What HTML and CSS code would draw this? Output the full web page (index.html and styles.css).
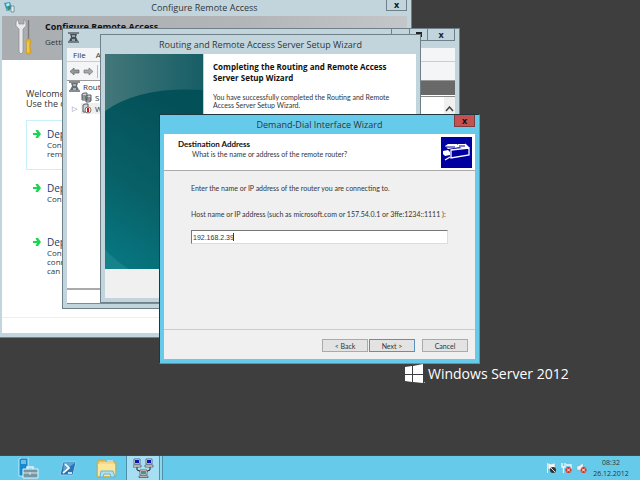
FILE: index.html
```html
<!DOCTYPE html>
<html lang="en">
<head>
<meta charset="utf-8">
<title>Windows Server 2012</title>
<link rel="stylesheet" href="styles.css">
</head>
<body>
<main class="desktop">
  <div class="brand">
    <svg class="brand-logo" width="22" height="20" viewBox="0 0 22 20"><path fill="#fff" d="M1 3l7-1v8H1zM9 2l10-2v10H9zM1 11h7v7l-7-1zM9 11h10v8L9 18z"/><path fill="#aaa" d="M20 18h1v1h-1z"/></svg>
    <span>Windows Server 2012</span>
  </div>

  <section class="window access">
    <header class="titlebar">
      <svg class="app-icon" width="11" height="11" viewBox="0 0 11 11"><path fill="#3c9ac4" d="M0 1l6-1 2 6-6 1z"/><path fill="#b8edf5" d="M2 2l3-1 1 3-3 .5z"/><path fill="#3a8f63" d="M3 5l3-2 1 4-3 1z"/><path fill="#e8eef0" stroke="#54788a" stroke-width=".7" d="M7 4h3v6H7z"/><path stroke="#3974a5" d="M2 8h4"/></svg>
      <h2 class="title">Configure Remote Access</h2>
      <button class="close" aria-label="Close Configure Remote Access">x</button>
    </header>
    <div class="pane">
      <div class="hero">
        <svg width="18" height="38" viewBox="0 0 18 38"><path fill="#e9e9e9" stroke="#8b8e90" stroke-width=".7" d="M3 1L1 4v4l3 3v23l2 2 2-2V11l3-3V4L9 1v5H4z"/><path stroke="#777b7e" stroke-width="1.4" d="M13.500 2v20"/><path fill="#e8b520" stroke="#c99310" stroke-width=".6" d="M12 21h3l1 3-1 3 1 8-1 1h-3l-1-1 1-8-1-3z"/><path stroke="#f8dc72" d="M13 24v10"/></svg>
        <div class="hero-text"><h3>Configure Remote Access</h3><p>Getti</p></div>
      </div>
      <div class="choices">
        <p class="welcome">Welcome<br>Use the o</p>
        <a href="#both" class="choice selected"><svg class="arrow" width="8" height="8" viewBox="0 0 8 8"><path fill="#18d64d" d="M0 3h4L2.500 0H5l3 4-3 4H2.500L4 5H0z"/></svg><span><b>Dep</b><small>Conf<br>remo</small></span></a>
        <a href="#direct" class="choice"><svg class="arrow" width="8" height="8" viewBox="0 0 8 8"><path fill="#18d64d" d="M0 3h4L2.500 0H5l3 4-3 4H2.500L4 5H0z"/></svg><span><b>Dep</b><small>Conf</small></span></a>
        <a href="#vpn" class="choice"><svg class="arrow" width="8" height="8" viewBox="0 0 8 8"><path fill="#18d64d" d="M0 3h4L2.500 0H5l3 4-3 4H2.500L4 5H0z"/></svg><span><b>Dep</b><small>Conf<br>conn<br>can l</small></span></a>
      </div>
      <footer class="pane-foot"></footer>
    </div>
  </section>

  <section class="window console">
    <header class="titlebar">
      <svg class="app-icon" width="11" height="11" viewBox="0 0 11 11"><path d="M0 1h11M0 10h11" stroke="#25292b"/><path fill="#445057" d="M2 2h7l-1 3 2 4H1l2-4z"/><path stroke="#eef" d="M4 4h3M4 8h3"/></svg>
      <div class="controls"><button aria-label="Minimize"></button><button aria-label="Maximize"><svg width="6" height="5"><path fill="none" stroke="#222" stroke-width="2" d="M1 1h4v3H1z"/></svg></button><button class="shut" aria-label="Close console">x</button></div>
    </header>
    <div class="pane">
      <nav class="menu"><button>File</button><button>A</button></nav>
      <div class="toolbar">
        <button aria-label="Back"><svg width="11" height="9" viewBox="0 0 11 9"><path fill="#92989b" stroke="#666" stroke-width=".7" d="M1 4.500L5 1v2h5v3H5v2z"/></svg></button>
        <button aria-label="Forward"><svg width="11" height="9" viewBox="0 0 11 9"><path fill="#a5aaac" stroke="#777" stroke-width=".7" d="M10 4.500L6 1v2H1v3h5v2z"/></svg></button>
        <i></i>
      </div>
      <div class="console-main">
        <ul class="tree">
          <li><svg width="11" height="11" viewBox="0 0 11 11"><path d="M0 1h11M0 10h11" stroke="#161918"/><path fill="#647078" d="M2 2h7l-1 3 2 4H1l2-4z"/><path stroke="#eef" d="M4 4h3M4 8h3"/></svg>Routi</li>
          <li class="sub"><svg width="11" height="11" viewBox="0 0 11 11"><path fill="#d2d7d9" stroke="#555f64" d="M1 2l2-1h3v7H1zM5 4l2-1h3v6l-2 1H5z"/><path stroke="#555" d="M1 4h4M1 6h4M5 6h5M5 8h5"/></svg>S</li>
          <li class="sub current"><span class="twist">▷</span><svg width="11" height="11" viewBox="0 0 11 11"><path fill="#d2d7d9" stroke="#555f64" d="M2 2l2-1h3v8H2z"/><circle cx="7" cy="7" r="3" fill="#fff" stroke="#777"/><path fill="#e01010" d="M6 5h2v4H6z"/></svg>W</li>
        </ul>
        <div class="detail"><div class="detail-head"></div><div class="detail-body"><button class="scroll-up" aria-label="Scroll up"><svg width="9" height="6" viewBox="0 0 9 6"><path fill="none" stroke="#444" stroke-width="1.500" d="M1 5l3.500-4L8 5"/></svg></button></div></div>
      </div>
      <footer class="status"></footer>
    </div>
  </section>

  <section class="window setup">
    <header class="titlebar"><h2 class="title">Routing and Remote Access Server Setup Wizard</h2></header>
    <div class="pane">
      <div class="setup-main">
        <svg class="banner" viewBox="0 0 98 215" preserveAspectRatio="none"><defs><linearGradient id="deep" x1=".6" y1="0" x2=".3" y2="1"><stop offset=".2" stop-color="#045058"/><stop offset=".65" stop-color="#086067"/><stop offset="1" stop-color="#07757f"/></linearGradient><linearGradient id="haze" x2="1" y2="0"><stop stop-color="#43777a"/><stop offset="1" stop-color="#175e67"/></linearGradient></defs><path fill="url(#deep)" d="M0 0h98v215H0z"/><path fill="url(#haze)" d="M0 0h98v36Q35 32 0 57z"/><path fill="#168289" d="M0 195q10 12 24 20H0z"/></svg>
        <div class="setup-text"><h3>Completing the Routing and Remote Access Server Setup Wizard</h3><p>You have successfully completed the Routing and Remote Access Server Setup Wizard.</p></div>
      </div>
      <footer class="setup-foot"></footer>
    </div>
  </section>

  <section class="window dial">
    <header class="titlebar"><h1 class="title">Demand-Dial Interface Wizard</h1><button class="close" aria-label="Close wizard">x</button></header>
    <form class="pane">
      <div class="dial-head">
        <div><h3>Destination Address</h3><p>What is the name or address of the remote router?</p></div>
        <svg width="31" height="31" viewBox="0 0 31 31"><path fill="#0000a0" d="M0 0h31v31H0z"/><path stroke="#000070" stroke-dasharray="1 3" d="M0 3h31M0 28h31"/><path fill="#fff" d="M4 9l3-2h9l3 3-12 2zM17 7h7l4 4-6 1-5-3zM2 14l5-1 2 2v3l-5 1-2-2z"/><path fill="none" stroke="#fff" stroke-width="1.300" d="M10 13l18-2v7l-18 3zM9 20l-5 3M24 7l4 4"/><path fill="none" stroke="#0000a0" d="M5 10h9M18 9h6"/></svg>
      </div>
      <div class="dial-body">
        <p>Enter the name or IP address of the router you are connecting to.</p>
        <label for="host">Host name or IP address (such as microsoft.com or 157.54.0.1 or 3ffe:1234::1111 ):</label>
        <div class="field"><input id="host" type="text" value="192.168.2.39"><i class="caret"></i></div>
      </div>
      <footer class="actions"><button type="button">&lt; Back</button><button type="button" class="primary">Next &gt;</button><button type="button" class="cancel">Cancel</button></footer>
    </form>
  </section>

  <nav class="taskbar">
    <button aria-label="Server Manager"><svg width="21" height="21" viewBox="0 0 21 21"><path fill="#1689cc" stroke="#d9f4ff" stroke-width=".8" d="M1 1l2-1h7v18H1z"/><path stroke="#c9efff" d="M3 3h5M3 5h5"/><path fill="none" stroke="#e8f2f5" stroke-width="1.500" d="M9 12V9h6v3"/><path fill="#7797a5" stroke="#e8f2f5" d="M5 11h15v9H5z"/><path stroke="#dce9ed" d="M5 15h15M12 14v3"/></svg></button>
    <button aria-label="PowerShell"><svg width="18" height="15" viewBox="0 0 18 15"><path fill="#2875b4" stroke="#91cdf0" d="M4 1h13l-3 13H1z"/><path fill="#5ba6d5" d="M5 2h11L4 10z"/><path fill="none" stroke="#fff" stroke-width="1.700" d="M6 3l4 4-6 5M9 12h4"/></svg></button>
    <button aria-label="File Explorer"><svg width="21" height="19" viewBox="0 0 21 19"><path fill="#e5bd59" stroke="#c99e42" stroke-width=".6" d="M1 3l2-2h6l2 2h9v15H1z"/><path fill="#fbe69a" d="M2 5h17v12H2z"/><path stroke="#fff5c7" d="M3 4h15M11 2h6"/><path fill="#aee0f4" stroke="#65b4d7" d="M4 18l1-6h12l2 6h-4l-1-3H8l-1 3z"/></svg></button>
    <button class="active" aria-label="Routing and Remote Access"><svg width="21" height="20" viewBox="0 0 21 20"><path fill="none" stroke="#222" d="M4 8v4l5 2M17 8v4l-5 2"/><g fill="#eee" stroke="#444" stroke-width=".7"><path d="M1 1h6v5H1zM13 1h6v5h-6zM7 12h7v5H7z"/><path d="M0 7h8v2H0zM12 7h8v2h-8zM6 18h9v1.500H6z"/></g><path fill="#0719bd" d="M2 2h4v3H2zM14 2h4v3h-4z"/><path fill="#37999c" d="M8 13h5v3H8z"/></svg></button>
    <span class="stack-edge"></span>
    <div class="tray">
      <svg width="11" height="12" viewBox="0 0 11 12"><path stroke="#fff" d="M1.500 1v10"/><path fill="#f2f5f6" stroke="#8ba5af" stroke-width=".5" d="M2 1l3 1 4-1v6H2z"/><circle cx="7" cy="8" r="3" fill="#333"/><path stroke="#ddd" d="M5 6l4 4"/></svg>
      <svg width="11" height="12" viewBox="0 0 11 12"><path fill="none" stroke="#f5f8fa" stroke-width="1.300" d="M1 1v4h3V1M2.500 5v6M5 3h5v4"/><circle cx="7.500" cy="8" r="3" fill="#d93127"/><path stroke="#fff" d="M6 6.500l3 3M9 6.500l-3 3"/></svg>
      <svg width="11" height="12" viewBox="0 0 11 12"><path fill="#f1f3f4" stroke="#8ba5af" stroke-width=".5" d="M1 4h2l4-3v9L3 8H1z"/><circle cx="7.500" cy="8" r="3" fill="#d93127"/><path stroke="#fff" d="M6 6.500l3 3M9 6.500l-3 3"/></svg>
      <time datetime="2012-12-26T08:32">08:32<br>26.12.2012</time>
    </div>
  </nav>
</main>
</body>
</html>
```
FILE: styles.css
```css
* { box-sizing: border-box; }
body { margin: 0; font: 8px/10px "Open Sans", "Noto Sans", sans-serif; color: #303538; }
h1, h2, h3, p, ul { margin: 0; padding: 0; }
button, input { margin: 0; padding: 0; font: inherit; color: inherit; border: 0; border-radius: 0; background: none; }
a { color: inherit; text-decoration: none; }
svg { display: block; flex: none; }
.desktop { position: relative; min-height: 100vh; overflow: hidden; background: #3e3e3e; display: flex; flex-direction: column; justify-content: flex-end; }

/* Windows on the desktop */
.window { position: absolute; display: flex; flex-direction: column; overflow: hidden; border: 1px solid #708089; background: #c3d5dc; padding: 0 4px 4px; }
.titlebar { position: relative; height: 19px; flex: none; display: flex; justify-content: center; align-items: center; }
.title { font-size: 9px; font-weight: 400; line-height: 12px; white-space: nowrap; }
.app-icon { position: absolute; left: 1px; top: 3px; }
.pane { flex: 1; min-height: 0; display: flex; flex-direction: column; background: #fff; }
.close { position: absolute; right: 0; top: 0; width: 21px; height: 12px; border: 1px solid #708089; border-top: 0; font-weight: 700; font-size: 9px; line-height: 8px; color: #111; }

.access { left: -3px; top: -4px; width: 415px; height: 342px; }
.access .title { margin-top: 2px; }
.access .close { top: 3px; height: 11px; }
.access .app-icon { left: 2px; top: 5px; }
.hero { height: 44px; flex: none; display: flex; gap: 12px; padding: 2px 13px; background: linear-gradient(90deg, #a9adaf, #b3b6b8 60%, #c4c7c9); }
.hero-text { padding-top: 1px; }
.hero h3 { font-size: 9px; line-height: 16px; color: #111; }
.hero p { line-height: 14px; }
.choices { flex: 1; padding: 29px 24px 0; }
.welcome { line-height: 10px; font-size: 9px; margin-bottom: 11px; }
.choice { display: flex; height: 50px; margin-bottom: 4px; padding: 8px 6px; gap: 6px; border: 1px solid transparent; }
.choice.selected { border-color: #c6f2fb; }
.arrow { margin-top: 1px; }
.choice b { display: block; font-size: 10px; line-height: 11px; font-weight: 400; color: #203b70; }
.choice small { display: block; font-size: 8px; line-height: 9px; }
.pane-foot { height: 16px; border-top: 1px solid #eee; }

.console { left: 62px; top: 28px; width: 398px; height: 281px; }
.controls { position: absolute; right: 0; top: 0; display: flex; }
.controls button { width: 18px; height: 12px; border: 1px solid #708089; border-width: 0 0 1px 1px; display: flex; justify-content: center; align-items: center; }
.controls .shut { width: 28px; border-right-width: 1px; font-size: 9px; line-height: 8px; font-weight: 700; color: #222; }
.menu { height: 14px; flex: none; display: flex; gap: 10px; padding: 0 6px; background: #f4f5f6; border-bottom: 1px solid #ccc; }
.toolbar { height: 19px; flex: none; display: flex; align-items: center; gap: 3px; padding: 0 2px; background: #f4f5f6; border-bottom: 1px solid #999; }
.toolbar i { height: 13px; border-left: 1px solid #bbb; }
.console-main { flex: 1; display: grid; grid-template-columns: 1fr 150px; }
.tree { list-style: none; padding: 0 2px; }
.tree li { display: flex; align-items: center; gap: 3px; height: 11px; white-space: nowrap; }
.tree .sub { padding-left: 12px; position: relative; }
.tree .current { background: linear-gradient(90deg, transparent 12px, #eee 12px); }
.twist { position: absolute; left: 3px; font-size: 7px; color: #777; }
.detail { display: flex; flex-direction: column; }
.detail-head { height: 14px; background: #696969; }
.detail-body { flex: 1; display: flex; justify-content: flex-end; align-items: flex-start; margin-top: 1px; border-top: 1px solid #888; }
.scroll-up { width: 11px; height: 24px; background: #f0f0f0; display: flex; align-items: center; justify-content: center; }
.status { height: 16px; border-top: 2px solid #aaa; border-bottom: 1px solid #888; }

.setup { left: 100px; top: 34px; width: 321px; height: 269px; }
.setup-main { flex: 1; min-height: 0; display: flex; }
.banner { width: 98px; height: 100%; }
.setup-text { flex: 1; padding: 7px 9px; border-left: 1px solid #ccc; }
.setup h3 { font-size: 8px; line-height: 11px; color: #111; margin-bottom: 10px; }
.setup p, .dial .pane { font-family: Lato, "Liberation Sans", sans-serif; font-size: 7px; }
.setup p { line-height: 8px; }
.setup-foot { height: 29px; background: #f0f0f0; }

.dial { left: 159px; top: 114px; width: 321px; height: 250px; background: #66cbea; border-color: #1e3840 #4b9bb4 #4b9bb4 #1e3840; }
.dial .close { background: #c75050; border-color: #7c3c40; }
.dial .pane { background: #f0f0f0; }
.dial-head { height: 37px; flex: none; display: flex; justify-content: space-between; align-items: flex-start; padding: 3px; background: #fff; border-bottom: 1px solid #aaa; }
.dial h3 { font-size: 8px; line-height: 9px; padding: 3px 11px 0; color: #111; }
.dial-head p { padding-left: 25px; line-height: 10px; }
.dial-body { flex: 1; padding: 12px 27px; }
.dial-body p, .dial-body label { display: block; line-height: 10px; margin-bottom: 16px; white-space: nowrap; }
.dial-body label { margin-bottom: 11px; }
.field { position: relative; }
.field input { width: 100%; height: 14px; padding: 0 1px; background: #fff; border: 1px solid #ddd; border-top-color: #777; border-left-color: #777; font-family: "Liberation Sans", sans-serif; font-size: 7px; outline: 0; }
.caret { position: absolute; left: 42px; top: 3px; height: 8px; border-left: 1px solid #146; }
.actions { height: 30px; flex: none; display: flex; justify-content: flex-end; align-items: flex-start; gap: 1px; padding: 9px 7px 0; border-top: 1px solid #ccc; }
.actions button { width: 46px; height: 13px; background: #e3e3e3; border: 1px solid #aaa; }
.actions .primary { border-color: #5c91bd; }
.actions .cancel { margin-left: 6px; }

.brand { position: absolute; left: 404px; top: 364px; display: flex; align-items: center; gap: 2px; font-size: 14px; line-height: 20px; color: #fff; white-space: nowrap; }

.taskbar { height: 25px; display: flex; background: #66cbea; border-top: 1px solid #31505a; }
.taskbar button { width: 39px; display: flex; align-items: center; justify-content: center; }
.taskbar button:first-child { margin-left: 9px; }
.taskbar .active { width: 34px; background: #a6dff3; border: 1px solid #4f8fa5; border-width: 0 1px; }
.stack-edge { width: 3px; background: #8dd7ef; border-right: 1px solid #4f8fa5; }
.tray { margin-left: auto; display: flex; align-items: center; gap: 4px; padding-right: 9px; }
time { width: 40px; text-align: center; line-height: 11px; font-size: 7px; }
```
